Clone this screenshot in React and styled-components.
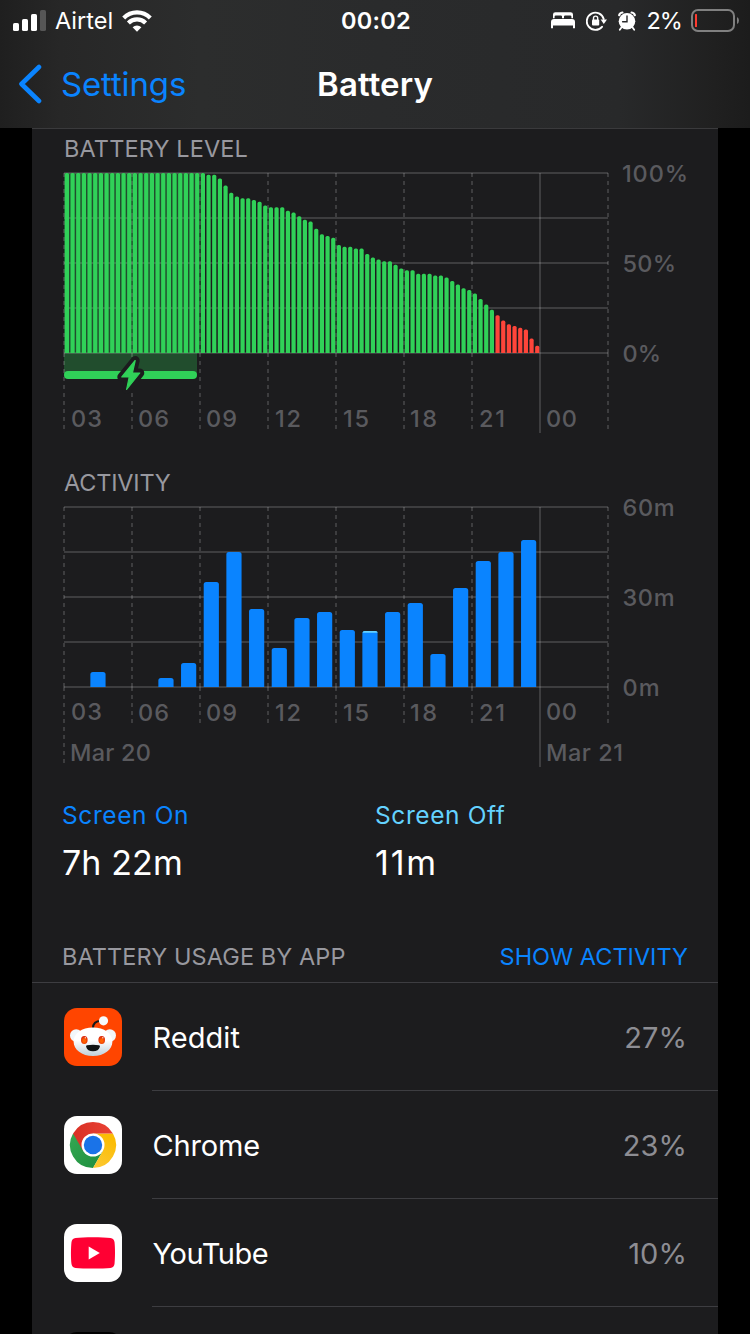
import React from "react";
import styled, { createGlobalStyle } from "styled-components";

const GlobalStyle = createGlobalStyle`
  body {
    margin: 0;
    background: #000;
    font-family: Inter, "Liberation Sans", sans-serif;
    color: #fff;
  }

  * {
    box-sizing: border-box;
  }
`;

const Screen = styled.div`
  width: 750px;
  height: 1334px;
  overflow: hidden;
  background: #000;
`;

const Header = styled.header`
  height: 128px;
  background: linear-gradient(
    to right,
    #1f1f1f 0,
    #272727 60px,
    #2c2d2d 200px,
    #2a2b2c 380px,
    #28292a 620px,
    #202020 715px,
    #1c1c1c 750px
  );
`;

const StatusBar = styled.div`
  display: grid;
  grid-template-columns: 1fr auto 1fr;
  align-items: center;
  height: 41px;
  padding: 0 11px 0 13px;
  font-size: 23.5px;
  line-height: 28px;
`;

const StatusGroup = styled.div`
  display: flex;
  align-items: center;
  justify-content: ${(props) => (props.$end ? "flex-end" : "flex-start")};

  svg {
    display: block;
    flex: none;
  }
`;

const StatusIcons = styled.div`
  display: flex;
  align-items: center;
  gap: 11px;
`;

const Carrier = styled.span`
  margin: 0 9px;
`;

const Clock = styled.span`
  font-weight: 600;
  letter-spacing: 0.3px;
`;

const Charge = styled.span`
  margin: 0 9px 0 10px;
  letter-spacing: -0.9px;
`;

const NavBar = styled.nav`
  display: grid;
  grid-template-columns: 1fr auto 1fr;
  align-items: center;
  height: 86px;
  padding: 0 18px;
`;

const BackLink = styled.div`
  display: flex;
  align-items: center;
  gap: 19px;
  color: #0a84ff;
  font-size: 33px;
  letter-spacing: -0.15px;
`;

const NavTitle = styled.h1`
  margin: 0;
  font-size: 33px;
  font-weight: 600;
  letter-spacing: 0.1px;
`;

const Card = styled.main`
  margin: 0 32px;
  border-top: 1px solid #3a3a3c;
  background: #1c1c1e;
`;

const ChartTitle = styled.h2`
  margin: 0;
  padding: ${(props) => props.$gap}px 32px 0;
  line-height: ${(props) => props.$line}px;
  font-size: 23.5px;
  font-weight: 400;
  letter-spacing: ${(props) => props.$track}px;
  color: #98989f;
`;

const Chart = styled.svg`
  display: block;
  width: 686px;
  overflow: visible;
`;

const AxisLabel = styled.text`
  font-size: 23.5px;
  font-weight: 500;
  fill: #5a5a5e;
`;

const Summary = styled.section`
  display: grid;
  grid-template-columns: 313px 1fr;
  padding: 25px 0 0 30px;
  height: 151px;
`;

const SummaryLabel = styled.div`
  font-size: 24.5px;
  line-height: 30px;
  letter-spacing: 0.6px;
  color: ${(props) => props.$color};
`;

const SummaryValue = styled.div`
  margin-top: 13px;
  font-size: 34px;
  line-height: 40px;
  letter-spacing: ${(props) => props.$track}px;
`;

const UsageHeader = styled.div`
  display: flex;
  justify-content: space-between;
  padding: 0 30px;
  height: 57px;
  line-height: 62px;
  font-size: 23.5px;
  color: #98989f;
  border-bottom: 1px solid #3d3d41;
`;

const UsageTitle = styled.span`
  letter-spacing: 0.1px;
`;

const UsageToggle = styled.span`
  color: #0a84ff;
`;

const AppRow = styled.div`
  display: flex;
  height: 108px;
  padding-left: 32px;
`;

const AppIcon = styled.svg`
  display: block;
  flex: none;
  width: 58px;
  height: 58px;
  margin: 25px 30px 0 0;
`;

const AppInfo = styled.div`
  display: flex;
  flex: 1;
  align-items: center;
  justify-content: space-between;
  padding: 2px 31px 0 0.5px;
  border-bottom: 1px solid #3d3d41;
  font-size: 29px;
`;

const AppName = styled.span`
  letter-spacing: ${(props) => props.$track}px;
`;

const AppShare = styled.span`
  color: #8d8d93;
  letter-spacing: 0.1px;
`;

// one value per 15 minutes, in percent
const levels = [
  ...Array(25).fill(100),
  99, 99, 97, 93, 89, 87, 86, 86, 85, 84, 82, 81, 81, 81, 79, 78, 76, 74, 73,
  69, 66, 65, 64, 60, 59, 59, 58, 58, 55, 53, 52, 51, 51, 49, 47, 46, 46, 44,
  44, 44, 43, 43, 42, 40, 38, 36, 35, 33, 30, 27, 24, 21, 18, 16, 15, 14, 13,
  8, 4,
];

// minutes of use per hour
const activity = [
  0, 5, 0, 0, 3, 8, 35, 45, 26, 13, 23, 25, 19, 18.7, 25, 28, 11, 33, 42, 45,
  49,
];

const hours = [
  { label: "03", x: 71, width: 31 },
  { label: "06", x: 138, width: 31 },
  { label: "09", x: 206, width: 31 },
  { label: "12", x: 275, width: 26 },
  { label: "15", x: 343, width: 26 },
  { label: "18", x: 410, width: 27 },
  { label: "21", x: 479, width: 26 },
  { label: "00", x: 546, width: 31 },
];

function Grid({ top, tall, short, first }) {
  const axis = top + 180;
  return (
    <g stroke="#fff" strokeOpacity="0.15" strokeWidth="2">
      {[0, 45, 90, 135, 180].map((y) => (
        <path key={y} d={`M64 ${top + y}H608`} />
      ))}
      {[0, 1, 2, 3, 4, 5, 6, 8].map((n) => (
        <path
          key={n}
          strokeDasharray="4 4"
          d={`M${64 + n * 68} ${top}V${axis}M${64 + n * 68} ${axis}v${
            n === 0 ? first : short
          }`}
        />
      ))}
      <path d={`M540 ${top}v${tall}`} />
    </g>
  );
}

function Labels({ items, y }) {
  return items.map((item) => (
    <AxisLabel
      key={item.label}
      x={item.x}
      y={item.y || y}
      textLength={item.width}
    >
      {item.label}
    </AxisLabel>
  ));
}

function roundedBar(x, y, w, bottom, r) {
  return `M${x} ${bottom}V${y + r}q0 ${-r} ${r} ${-r}h${w - 2 * r}q${r} 0 ${r} ${r}V${bottom}z`;
}

function LevelChart() {
  return (
    <Chart viewBox="32 169 686 284" height="284">
      <path fill="#30d158" fillOpacity="0.27" d="M64 173h133v202H64z" />
      <Grid top={173} tall={260} short={76} first={76} />
      {levels.map((level, i) => (
        <path
          key={i}
          fill={level > 21 ? "#30d158" : "#ff453a"}
          d={roundedBar(64.8 + (i * 17) / 3, 353 - level * 1.8, 4.2, 353, 1.6)}
        />
      ))}
      <rect x="64" y="371" width="133" height="8" rx="4" fill="#30d158" />
      <path
        fill="#1c1c1e"
        stroke="#1c1c1e"
        strokeWidth="9"
        strokeLinejoin="round"
        d="M135.200 360.500L121.800 377h7.400l-2.600 12.500L139.800 373h-7.400z"
      />
      <path
        fill="#30d158"
        stroke="#30d158"
        strokeWidth="1.2"
        strokeLinejoin="round"
        d="M135.200 360.500L121.800 377h7.400l-2.600 12.500L139.800 373h-7.400z"
      />
      <Labels items={hours} y={427} />
      <Labels
        items={[
          { label: "100%", x: 622, y: 182, width: 66 },
          { label: "50%", x: 622.5, y: 272, width: 53.5 },
          { label: "0%", x: 622.5, y: 362, width: 38.5 },
        ]}
      />
    </Chart>
  );
}

function ActivityChart() {
  return (
    <Chart viewBox="32 499 686 276" height="276">
      <Grid top={507} tall={260} short={36} first={76} />
      {activity.map(
        (minutes, i) =>
          minutes > 0 && (
            <path
              key={i}
              fill="#0a84ff"
              d={roundedBar(
                67.7 + (i * 68) / 3,
                687 - minutes * 3,
                15.2,
                687,
                2.5
              )}
            />
          )
      )}
      <path fill="#64d2ff" d="M362.600 632.800q0-1.800 2-1.800h11q2 0 2 1.800z" />
      <Labels
        items={hours.map((hour) =>
          hour.label === "03" || hour.label === "00"
            ? { ...hour, y: 720 }
            : hour
        )}
        y={721}
      />
      <Labels
        items={[
          { label: "60m", x: 622.5, y: 516, width: 52 },
          { label: "30m", x: 622.5, y: 606, width: 52 },
          { label: "0m", x: 622.5, y: 696, width: 37 },
          { label: "Mar 20", x: 70, y: 761, width: 81 },
          { label: "Mar 21", x: 546, y: 761, width: 77 },
        ]}
      />
    </Chart>
  );
}

function SignalIcon() {
  return (
    <svg width="33" height="22" viewBox="0 0 33 22" fill="#fff">
      <rect x="0" y="13" width="6" height="8" rx="1.6" />
      <rect x="9" y="9" width="6" height="12" rx="1.6" />
      <rect x="18" y="4" width="6" height="17" rx="1.6" />
      <rect x="27" y="0" width="6" height="21" rx="1.6" fill="#565656" />
    </svg>
  );
}

function WifiIcon() {
  return (
    <svg width="30" height="22" viewBox="0 0 30 22">
      <g fill="none" stroke="#fff" strokeWidth="4.2">
        <path d="M1.700 7.900a19 19 0 0 1 26.600 0" />
        <path d="M6.400 12.900a12.200 12.200 0 0 1 17.200 0" />
      </g>
      <path fill="#fff" d="M15 21.700l-4.400-4.400a6.400 6.400 0 0 1 8.800 0z" />
    </svg>
  );
}

function BedIcon() {
  return (
    <svg width="24" height="17" viewBox="0 0 24 17" fill="#fff">
      <path d="M2 6.200V2.600Q2 .2 4.400.2h15.200Q22 .2 22 2.600V6.200h-1.600V4.600Q20.400 3.400 19.200 3.400h-5Q13 3.400 13 4.600v1.600h-2V4.600Q11 3.400 9.800 3.400h-5Q3.600 3.400 3.600 4.600v1.600z" />
      <path d="M0 10q0-3 3-3h18q3 0 3 3v6.200h-2v-2.600H2v2.600H0z" />
    </svg>
  );
}

function RotationLockIcon() {
  return (
    <svg width="21" height="20" viewBox="0 0 21 20">
      <path
        d="M16 15.800A8.600 8.600 0 1 1 17.700 8"
        fill="none"
        stroke="#fff"
        strokeWidth="1.900"
        strokeLinecap="round"
      />
      <path d="M14.600 8.400H21L17.800 13z" fill="#fff" />
      <rect x="6" y="8.600" width="7.200" height="5.800" rx="1" fill="#fff" />
      <path
        d="M7.500 9.200V7.200a2.100 2.100 0 0 1 4.200 0v2"
        fill="none"
        stroke="#fff"
        strokeWidth="1.400"
      />
    </svg>
  );
}

function AlarmIcon() {
  return (
    <svg width="18" height="20" viewBox="1 0 18 20">
      <circle cx="10" cy="10.300" r="8.300" fill="#fff" />
      <g stroke="#fff" strokeLinecap="round">
        <path d="M2.200 4.200Q2.600 1.900 5.400 1.500" strokeWidth="2.200" fill="none" />
        <path d="M17.800 4.200Q17.400 1.900 14.600 1.500" strokeWidth="2.200" fill="none" />
        <path d="M4.400 16.500l-1.600 2.200M15.600 16.500l1.600 2.200" strokeWidth="1.800" />
      </g>
      <path
        d="M10 5v5.800H5.600"
        fill="none"
        stroke="#29292a"
        strokeWidth="1.400"
        strokeLinecap="round"
      />
    </svg>
  );
}

function BatteryIcon() {
  return (
    <svg width="48" height="24" viewBox="0 0 48 24">
      <rect
        x="1"
        y="1"
        width="42"
        height="21"
        rx="6"
        fill="none"
        stroke="#808080"
        strokeWidth="2"
      />
      <rect x="4" y="5" width="2" height="13" rx="0.500" fill="#ff3b30" />
      <path d="M46 8q2 1.200 2 3.500t-2 3.500z" fill="#808080" />
    </svg>
  );
}

function BackIcon() {
  return (
    <svg width="24" height="40" viewBox="0 0 24 40">
      <path
        d="M21 3L3.500 20 21 37"
        fill="none"
        stroke="#0a84ff"
        strokeWidth="4.600"
        strokeLinecap="round"
        strokeLinejoin="round"
      />
    </svg>
  );
}

function RedditIcon() {
  return (
    <AppIcon viewBox="0 0 58 58">
      <defs>
        <linearGradient id="snoo" x1="0" y1="0" x2="0" y2="1">
          <stop offset="0.450" stopColor="#fff" />
          <stop offset="1" stopColor="#bfd0da" />
        </linearGradient>
        <radialGradient id="eye" cx="0.500" cy="0.600" r="0.600">
          <stop offset="0.300" stopColor="#ff6101" />
          <stop offset="1" stopColor="#d8200a" />
        </radialGradient>
      </defs>
      <rect width="58" height="58" rx="13" fill="#ff4500" />
      <path
        d="M29 20q0-7 8-7.300"
        fill="none"
        stroke="#17191b"
        strokeWidth="2"
        strokeLinecap="round"
      />
      <circle cx="39.500" cy="12.800" r="4.600" fill="#f6fafc" />
      <circle cx="12.200" cy="27.500" r="6.200" fill="#f2f7fa" />
      <circle cx="45.800" cy="27.500" r="6.200" fill="#f2f7fa" />
      <path
        fill="url(#snoo)"
        d="M29 19.400c11.200 0 19.400 6 19.400 14S40.200 48 29 48 9.600 41.400 9.600 33.400s8.200-14 19.400-14z"
      />
      <ellipse cx="20.300" cy="32" rx="3.300" ry="4" fill="url(#eye)" />
      <ellipse cx="37.700" cy="32" rx="3.300" ry="4" fill="url(#eye)" />
      <circle cx="21.400" cy="29.800" r="0.800" fill="#ffd0bd" />
      <circle cx="38.800" cy="29.800" r="0.800" fill="#ffd0bd" />
      <path
        fill="#101314"
        d="M23 37.300q6-.9 12 0 1.200.2.900 1.400-1.300 4.500-6.900 4.500t-6.900-4.500q-.3-1.200.9-1.400z"
      />
    </AppIcon>
  );
}

function ChromeIcon() {
  return (
    <AppIcon viewBox="0 0 58 58">
      <defs>
        <linearGradient id="green" x1="0" y1="0" x2="1" y2="1">
          <stop offset="0" stopColor="#34a853" />
          <stop offset="1" stopColor="#1e8e3e" />
        </linearGradient>
        <linearGradient id="red" x1="0" y1="0" x2="1" y2="0">
          <stop offset="0" stopColor="#d93025" />
          <stop offset="1" stopColor="#ea4335" />
        </linearGradient>
        <linearGradient id="yellow" x1="0" y1="1" x2="0.400" y2="0">
          <stop offset="0" stopColor="#fcc934" />
          <stop offset="1" stopColor="#fbbc04" />
        </linearGradient>
      </defs>
      <rect width="58" height="58" rx="13" fill="#fff" />
      <path
        fill="url(#green)"
        d="M9.080 17.500A23 23 0 0 0 29 52l9.960-17.250L29 29z"
      />
      <path
        fill="url(#yellow)"
        d="M48.920 17.500A23 23 0 0 1 29 52l9.960-17.250L29 17.500z"
      />
      <path
        fill="url(#red)"
        d="M9.080 17.500a23 23 0 0 1 39.840 0H29L19.040 34.750z"
      />
      <circle cx="29" cy="29" r="11.500" fill="#fff" />
      <circle cx="29" cy="29" r="9.200" fill="#1a73e8" />
    </AppIcon>
  );
}

function YouTubeIcon() {
  return (
    <AppIcon viewBox="0 0 58 58">
      <rect width="58" height="58" rx="13" fill="#fff" />
      <path
        fill="#ff0033"
        d="M29 13.200c7 0 13.500.2 17.500.7 2.400.4 3.600 1.700 4 4 .7 5.500.7 16.500 0 22-.4 2.300-1.600 3.600-4 4-4 .5-10.500.7-17.500.7s-13.500-.2-17.500-.7c-2.400-.4-3.600-1.700-4-4-.7-5.500-.7-16.500 0-22 .4-2.300 1.600-3.600 4-4 4-.5 10.500-.7 17.500-.7z"
      />
      <path fill="#fff" d="M24.700 22.600v12.800L35.800 29z" />
    </AppIcon>
  );
}

function BlackIcon() {
  return (
    <AppIcon viewBox="0 0 58 58">
      <rect width="58" height="58" rx="13" fill="#000" />
    </AppIcon>
  );
}

const apps = [
  { name: "Reddit", share: "27%", track: 0.05, Icon: RedditIcon },
  { name: "Chrome", share: "23%", track: -0.15, Icon: ChromeIcon },
  { name: "YouTube", share: "10%", track: -0.45, Icon: YouTubeIcon },
  { name: "", share: "", track: 0, Icon: BlackIcon },
];

function App() {
  return (
    <>
      <GlobalStyle />
      <Screen>
        <Header>
          <StatusBar>
            <StatusGroup>
              <SignalIcon />
              <Carrier>Airtel</Carrier>
              <WifiIcon />
            </StatusGroup>
            <Clock>00:02</Clock>
            <StatusGroup $end>
              <StatusIcons>
                <BedIcon />
                <RotationLockIcon />
                <AlarmIcon />
              </StatusIcons>
              <Charge>2%</Charge>
              <BatteryIcon />
            </StatusGroup>
          </StatusBar>
          <NavBar>
            <BackLink>
              <BackIcon />
              <span>Settings</span>
            </BackLink>
            <NavTitle>Battery</NavTitle>
          </NavBar>
        </Header>
        <Card>
          <ChartTitle $gap={0} $line={40} $track={0.13}>
            BATTERY LEVEL
          </ChartTitle>
          <LevelChart />
          <ChartTitle $gap={14} $line={32} $track={-0.2}>
            ACTIVITY
          </ChartTitle>
          <ActivityChart />
          <Summary>
            <div>
              <SummaryLabel $color="#0a84ff">Screen On</SummaryLabel>
              <SummaryValue $track={0.1}>7h 22m</SummaryValue>
            </div>
            <div>
              <SummaryLabel $color="#64d2ff">Screen Off</SummaryLabel>
              <SummaryValue $track={1.8}>11m</SummaryValue>
            </div>
          </Summary>
          <UsageHeader>
            <UsageTitle>BATTERY USAGE BY APP</UsageTitle>
            <UsageToggle>SHOW ACTIVITY</UsageToggle>
          </UsageHeader>
          {apps.map(({ name, share, track, Icon }) => (
            <AppRow key={name}>
              <Icon />
              <AppInfo>
                <AppName $track={track}>{name}</AppName>
                <AppShare>{share}</AppShare>
              </AppInfo>
            </AppRow>
          ))}
        </Card>
      </Screen>
    </>
  );
}

export default App;
